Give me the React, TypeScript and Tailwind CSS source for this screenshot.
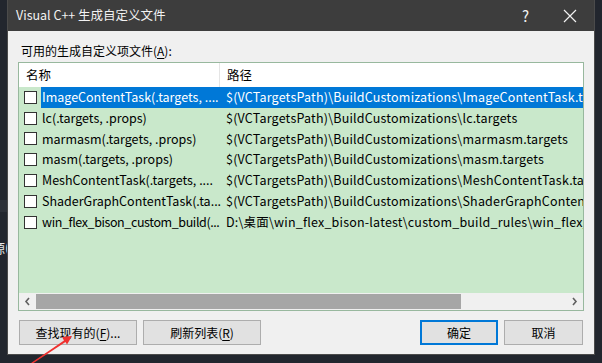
import React from "react";

const F = { fontFamily: '"Noto Sans CJK SC", "Noto Sans", sans-serif' };

const rows: { name: string; path: string; selected?: boolean; tight?: boolean }[] = [
  { name: "ImageContentTask(.targets, ....", path: "$(VCTargetsPath)\\BuildCustomizations\\ImageContentTask.targets", selected: true },
  { name: "lc(.targets, .props)", path: "$(VCTargetsPath)\\BuildCustomizations\\lc.targets" },
  { name: "marmasm(.targets, .props)", path: "$(VCTargetsPath)\\BuildCustomizations\\marmasm.targets" },
  { name: "masm(.targets, .props)", path: "$(VCTargetsPath)\\BuildCustomizations\\masm.targets" },
  { name: "MeshContentTask(.targets, ....", path: "$(VCTargetsPath)\\BuildCustomizations\\MeshContentTask.targets" },
  { name: "ShaderGraphContentTask(.ta...", path: "$(VCTargetsPath)\\BuildCustomizations\\ShaderGraphContentTask.targets" },
  { name: "win_flex_bison_custom_build(...", path: "D:\\桌面\\win_flex_bison-latest\\custom_build_rules\\win_flex_bison_custom_build.targets", tight: true },
];

export default function App() {
  return (
    <div className="relative w-[602px] h-[363px] bg-[#22262e] overflow-hidden text-[12.5px] text-black" style={F}>
      {/* left editor sliver */}
      <div className="absolute left-0 top-[200px] w-[7px] h-[12px] bg-[#2c3038]" />
      <div className="absolute left-[-8px] top-[240px] text-[13px] leading-[16px] text-[#e8e8e8]">源(</div>

      <div className="absolute left-[7px] top-0 w-[588px] h-[355px] flex flex-col bg-[#f0f0f0] border-x border-b border-[#4b4b4b]">
        {/* title bar */}
        <div className="h-[31px] bg-[#3d3d3d] flex items-center pl-[8px] text-[#f2f2f2] text-[12.5px] shrink-0">
          <span>Visual C++ 生成自定义文件</span>
          <span className="ml-auto mr-[34px] text-[15px] leading-none">?</span>
          <svg width="14" height="14" viewBox="0 0 14 14" className="mr-[17px]">
            <path d="M1 1 L13 13 M13 1 L1 13" stroke="#f2f2f2" strokeWidth="1.2" />
          </svg>
        </div>

        <div className="flex flex-col px-[10px]">
          <div className="mt-[11px] ml-[3px] h-[18px] leading-[18px] text-[12px]">
            可用的生成自定义项文件(<span className="underline underline-offset-2">A</span>):
          </div>
          {/* list */}
          <div className="mt-[2px] h-[249px] border border-[#98b89e] flex flex-col bg-[#c9e8cb]">
            <div className="h-[24px] bg-white flex items-center shrink-0">
              <div className="w-[201px] pl-[7px] h-full flex items-center border-r border-[#e5e5e5]">名称</div>
              <div className="pl-[7px]">路径</div>
            </div>
            <div className="flex-1 flex flex-col">
              {rows.map((r, i) => (
                <div key={i} className="h-[20.8px] flex items-center">
                  <div className="w-[13px] h-[13px] border border-[#333] bg-white ml-[5px] mr-[4px] shrink-0" />
                  <div className={`flex-1 flex items-center h-full overflow-hidden whitespace-nowrap ${r.selected ? "bg-[#0078d7] text-white" : ""}`}>
                    <div className={`w-[184px] pl-[1px] shrink-0 overflow-hidden ${r.tight ? "tracking-[-0.4px]" : ""}`}>{r.name}</div>
                    <div className="pl-[1px] tracking-[0.2px]">{r.path}</div>
                  </div>
                </div>
              ))}
            </div>
            {/* horizontal scrollbar */}
            <div className="h-[17px] bg-[#f0f0f0] flex items-center shrink-0">
              <svg width="17" height="17" viewBox="0 0 17 17" className="shrink-0">
                <path d="M10 5 L7 8.5 L10 12" stroke="#606060" strokeWidth="1.6" fill="none" />
              </svg>
              <div className="w-[425px] h-[15px] bg-[#a6a6a6]" />
              <div className="flex-1" />
              <svg width="17" height="17" viewBox="0 0 17 17" className="shrink-0">
                <path d="M7 5 L10 8.5 L7 12" stroke="#606060" strokeWidth="1.6" fill="none" />
              </svg>
            </div>
          </div>
          {/* buttons */}
          <div className="mt-[9px] flex gap-[6px] ml-[1px] mr-[1px] text-[12px]">
            <button className="w-[118px] h-[25px] bg-[#e1e1e1] border border-[#adadad] flex items-center justify-center">
              查找现有的(<span className="underline underline-offset-2">F</span>)...
            </button>
            <button className="w-[118px] h-[25px] bg-[#e1e1e1] border border-[#adadad] flex items-center justify-center">
              刷新列表(<span className="underline underline-offset-2">R</span>)
            </button>
            <div className="flex-1" />
            <button className="w-[78px] h-[25px] bg-[#e1e1e1] border-2 border-[#0078d7] flex items-center justify-center">
              确定
            </button>
            <button className="w-[79px] h-[25px] bg-[#e1e1e1] border border-[#adadad] flex items-center justify-center">
              取消
            </button>
          </div>
        </div>
      </div>

      {/* red arrow */}
      <svg className="absolute left-0 top-0" width="602" height="363" viewBox="0 0 602 363">
        <polygon points="31,363 64,340.5 62,337 72,336 67,344.5 65.5,342 32,364" fill="#f0312f" />
      </svg>
    </div>
  );
}
